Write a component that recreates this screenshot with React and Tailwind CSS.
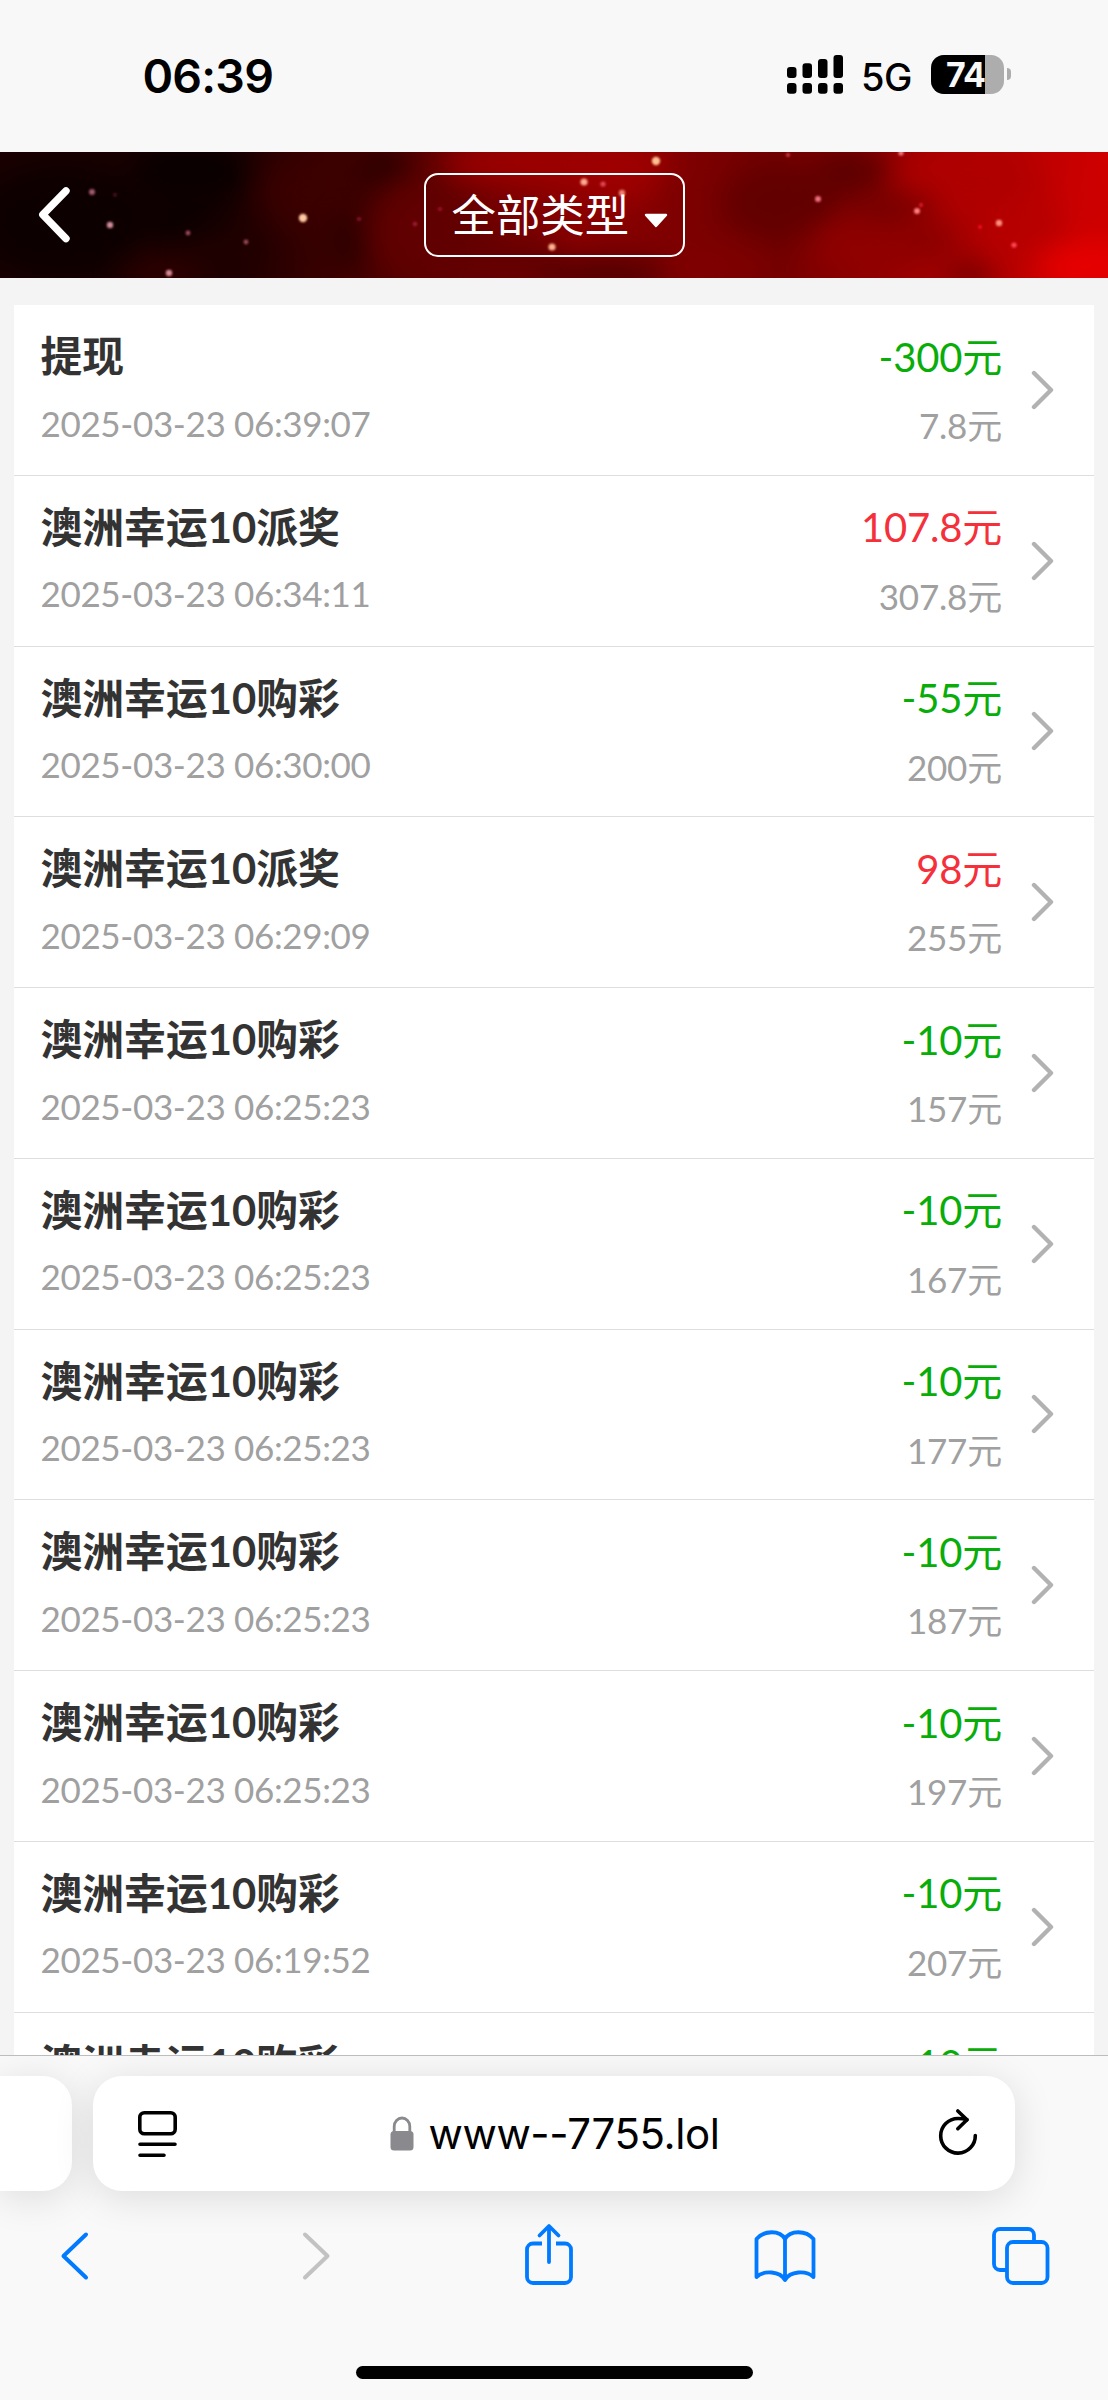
const records = [
  { title: "提现", time: "2025-03-23 06:39:07", amount: "-300", balance: "7.8" },
  { title: "澳洲幸运10派奖", time: "2025-03-23 06:34:11", amount: "107.8", balance: "307.8" },
  { title: "澳洲幸运10购彩", time: "2025-03-23 06:30:00", amount: "-55", balance: "200" },
  { title: "澳洲幸运10派奖", time: "2025-03-23 06:29:09", amount: "98", balance: "255" },
  { title: "澳洲幸运10购彩", time: "2025-03-23 06:25:23", amount: "-10", balance: "157" },
  { title: "澳洲幸运10购彩", time: "2025-03-23 06:25:23", amount: "-10", balance: "167" },
  { title: "澳洲幸运10购彩", time: "2025-03-23 06:25:23", amount: "-10", balance: "177" },
  { title: "澳洲幸运10购彩", time: "2025-03-23 06:25:23", amount: "-10", balance: "187" },
  { title: "澳洲幸运10购彩", time: "2025-03-23 06:25:23", amount: "-10", balance: "197" },
  { title: "澳洲幸运10购彩", time: "2025-03-23 06:19:52", amount: "-10", balance: "207" },
  { title: "澳洲幸运10购彩", amount: "-10" },
];

// cx, cy, rx, ry, color
const clouds = [
  [60, 70, 90, 60, "#0c0000"],
  [190, 20, 60, 30, "#080000"],
  [180, 65, 40, 30, "#0c0000"],
  [170, 120, 50, 16, "#340000"],
  [225, 100, 40, 20, "#200000"],
  [320, 40, 60, 40, "#3c0000"],
  [385, 15, 24, 14, "#1c0000"],
  [350, 90, 16, 26, "#240000"],
  [420, 80, 50, 50, "#620000"],
  [540, 10, 100, 26, "#a00000"],
  [500, 110, 60, 20, "#600000"],
  [630, 20, 50, 30, "#a00000"],
  [600, 122, 70, 16, "#440000"],
  [690, 40, 30, 30, "#7c0000"],
  [780, 50, 60, 40, "#600000"],
  [850, 20, 40, 26, "#580000"],
  [720, 115, 50, 18, "#800000"],
  [870, 95, 60, 26, "#900000"],
  [970, 30, 70, 40, "#b00000"],
  [895, 56, 44, 12, "#680000"],
  [935, 88, 26, 10, "#780000"],
  [970, 124, 26, 10, "#500000"],
  [1030, 80, 40, 30, "#b60000"],
  [1095, 60, 22, 40, "#cc0000"],
  [1085, 115, 50, 24, "#ec0000"],
];

// cx, cy, r, color
const stars = [
  [92, 40, 3, "#a05a70"],
  [115, 43, 2.4, "#380818"],
  [110, 73, 3.2, "#d08a98"],
  [188, 81, 2.4, "#a04a60"],
  [246, 90, 2.4, "#9a4a55"],
  [169, 121, 3.2, "#d88890"],
  [303, 66, 4.2, "#ffc9a0"],
  [359, 67, 2, "#8a1830"],
  [415, 72, 2.2, "#a01c38"],
  [440, 57, 2, "#9a1830"],
  [552, 95, 3.6, "#ffb090"],
  [584, 30, 3.6, "#ffa890"],
  [603, 32, 2.6, "#e04858"],
  [622, 41, 3.2, "#f08070"],
  [656, 9, 4.2, "#ffc090"],
  [788, 3, 2, "#d03848"],
  [818, 47, 3, "#f07080"],
  [901, 1, 2.6, "#f07880"],
  [917, 59, 3, "#ff8080"],
  [921, 53, 2, "#e02030"],
  [999, 71, 3.2, "#ff9080"],
  [980, 75, 2, "#f01028"],
  [1014, 93, 2.6, "#ff4858"],
];

function StatusBar() {
  return (
    <div className="h-[152px] shrink-0 bg-[#f8f8f8] flex justify-between pl-[142.5px] pr-[97px] pt-[46px] text-black font-['Inter',sans-serif]">
      <span className="pt-px text-[46.5px] leading-[58px] font-semibold tracking-[-0.8px]">06:39</span>
      <div className="flex pt-[9px]">
        <svg width="56" height="39" viewBox="0 0 56 39">
          {[[0, 12], [15.5, 8.3], [31, 4], [46.5, 0]].map(([x, y]) => (
            <g key={x}>
              <rect x={x} y={y} width="9.5" height={23 - y} rx="3" />
              <rect x={x} y="28" width="9.5" height="10.7" rx="3" />
            </g>
          ))}
        </svg>
        <span className="ml-[18px] w-[70px] text-[38px] leading-[44px] font-medium tracking-[-0.6px]">5G</span>
        <div className="relative w-[73px] h-[39px] rounded-[13px] overflow-hidden bg-[#adadad]">
          <div className="w-[54px] h-full bg-black" />
          <span className="absolute left-[15px] top-0 text-[34px] leading-[39px] font-bold text-[#f8f8f8] tracking-[-0.8px]">74</span>
        </div>
        <div className="ml-[3px] mt-[13px] w-1 h-3 rounded-r-full bg-[#adadad]" />
      </div>
    </div>
  );
}

function Header() {
  return (
    <div className="relative h-[126px] shrink-0 overflow-hidden flex items-center justify-center">
      <svg className="absolute inset-0" width="1108" height="126" viewBox="0 0 1108 126">
        <defs>
          <linearGradient id="sky" x1="0" x2="1" y1="0" y2="0">
            <stop offset="0" stopColor="#1c0000" />
            <stop offset="0.2" stopColor="#1a0000" />
            <stop offset="0.3" stopColor="#3c0000" />
            <stop offset="0.42" stopColor="#680000" />
            <stop offset="0.52" stopColor="#8a0000" />
            <stop offset="0.7" stopColor="#740000" />
            <stop offset="0.85" stopColor="#a60000" />
            <stop offset="1" stopColor="#d00000" />
          </linearGradient>
          <filter id="haze" filterUnits="userSpaceOnUse" x="-100" y="-100" width="1308" height="326" colorInterpolationFilters="sRGB">
            <feGaussianBlur stdDeviation="15" />
          </filter>
          <filter id="glow" x="-100%" y="-100%" width="300%" height="300%">
            <feGaussianBlur stdDeviation="1.3" />
          </filter>
        </defs>
        <rect width="1108" height="126" fill="url(#sky)" />
        {clouds.map(([cx, cy, rx, ry, fill], i) => (
          <ellipse key={i} cx={cx} cy={cy} rx={rx} ry={ry} fill={fill} opacity="0.9" filter="url(#haze)" />
        ))}
        {stars.map(([cx, cy, r, fill], i) => (
          <circle key={i} cx={cx} cy={cy} r={r} fill={fill} filter="url(#glow)" />
        ))}
      </svg>
      <svg className="absolute left-[38px] top-[34px]" width="34" height="58" viewBox="0 0 34 58" fill="none" stroke="#fff" strokeWidth="7.4" strokeLinecap="round" strokeLinejoin="round">
        <path d="M28 4.8 4.8 28.7 28 52.6" />
      </svg>
      <button className="relative w-[261px] h-[84px] rounded-[14px] border-2 border-white flex items-center pl-[26px] text-white">
        <span className="-mt-[4px] text-[44.4px] leading-[60px] font-['Noto_Sans_CJK_SC',sans-serif] font-normal">全部类型</span>
        <svg className="ml-[15px] mt-[12px]" width="24" height="16" viewBox="0 0 24 16" fill="#fff" stroke="#fff" strokeWidth="2.4" strokeLinejoin="round">
          <path d="M2 2h20L12 13z" />
        </svg>
      </button>
    </div>
  );
}

function RecordRow({ title, time, amount, balance }) {
  return (
    <div className="h-[170.75px] shrink-0 border-b-[1.4px] border-[#dedede] flex justify-between pl-[26.5px] pr-[39px] font-['Lato','Noto_Sans_CJK_SC',sans-serif]">
      <div className="pt-[21px]">
        <p className="text-[41.8px] leading-[60px] font-bold text-[#333]">{title}</p>
        {time && <p className="mt-[6.5px] text-[35px] leading-[60px] tracking-[-0.35px] text-[#a0a0a0]">{time}</p>}
      </div>
      <div className="flex items-center">
        <div className="h-full pt-[21.5px] text-right">
          <p className={`text-[40px] leading-[60px] tracking-[-0.2px] ${amount.startsWith("-") ? "text-[#09ad09]" : "text-[#f5303a]"}`}>{amount}元</p>
          {balance && <p className="mt-[8.5px] text-[35px] leading-[60px] tracking-[-0.2px] text-[#a0a0a0]">{balance}元</p>}
        </div>
        <svg className="ml-[29px]" width="24" height="40" viewBox="0 0 24 40" fill="none" stroke="#b2b2b2" strokeWidth="4.4" strokeLinecap="round" strokeLinejoin="round">
          <path d="M3 3 20 20 3 37" />
        </svg>
      </div>
    </div>
  );
}

function AddressBar() {
  return (
    <div className="flex gap-[21px] pt-[20px]">
      <div className="w-[72px] h-[115px] rounded-r-[29px] bg-white shadow-[0_6px_40px_rgba(0,0,0,0.12)]" />
      <div className="w-[922px] h-[115px] rounded-[29px] bg-white shadow-[0_6px_40px_rgba(0,0,0,0.12)] flex items-center justify-between pl-[45px] pr-[36px]">
        <svg width="39" height="50" viewBox="0 0 39 50" fill="none" stroke="#000" strokeWidth="3.6" strokeLinecap="round">
          <rect x="1.8" y="3.8" width="35.4" height="21" rx="4.5" />
          <path d="M2 35.3h35M2 46.3h24" />
        </svg>
        <div className="flex items-center mr-[4px]">
          <svg width="24" height="35" viewBox="0 0 24 35">
            <path d="M4.2 17v-6.5a7.8 8.5 0 0 1 15.6 0V17" fill="none" stroke="#8a898e" strokeWidth="2.8" />
            <rect x="0.5" y="15" width="23" height="19.5" rx="3.5" fill="#8a898e" />
          </svg>
          <span className="ml-[14px] text-[42px] leading-[50px] text-black tracking-[-0.4px] font-['Inter',sans-serif]">www--7755.lol</span>
        </div>
        <svg className="-mt-px" width="42" height="50" viewBox="0 0 42 50" fill="none" stroke="#000" strokeWidth="3.6" strokeLinecap="round" strokeLinejoin="round">
          <path d="M38.3 27.5A17.3 17.3 0 1 1 21 10.5c3 0 6 .3 9 1.3" />
          <path d="M20.8 3 30 11.7l-9.2 9" />
        </svg>
      </div>
    </div>
  );
}

function Toolbar() {
  return (
    <div className="mt-[32px] h-[66px] flex items-center pl-[58.5px]">
      <svg width="32" height="52" viewBox="0 0 32 52" fill="none" stroke="#007aff" strokeWidth="4" strokeLinecap="round" strokeLinejoin="round">
        <path d="M27 4.5 4.5 26 27 47.5" />
      </svg>
      <svg className="ml-[209.5px]" width="32" height="52" viewBox="0 0 32 52" fill="none" stroke="#c2c2c2" strokeWidth="4" strokeLinecap="round" strokeLinejoin="round">
        <path d="M5 4.5 27.5 26 5 47.5" />
      </svg>
      <svg className="ml-[192px] -mt-1" width="50" height="64" viewBox="0 0 50 64" fill="none" stroke="#007aff" strokeWidth="3.8" strokeLinejoin="round">
        <path d="M18 21.5H9a6 6 0 0 0-6 6V55a6 6 0 0 0 6 6h32a6 6 0 0 0 6-6V27.5a6 6 0 0 0-6-6h-9" />
        <path d="M25 40V4.5M15.5 13.500 25 4l9.500 9.500" strokeLinecap="round" />
      </svg>
      <svg className="ml-[179.5px]" width="62" height="54" viewBox="0 0 62 54" fill="none" stroke="#007aff" strokeWidth="3.8" strokeLinecap="round" strokeLinejoin="round">
        <path d="M31 10v41c-5-9-21-10-28.500-3V10C10 1 26 1 31 10c5-9 21-9 28.500 0v38c-7.500-7-23.500-6-28.500 3" />
      </svg>
      <svg className="ml-[175px]" width="60" height="60" viewBox="0 0 60 60" fill="none" stroke="#007aff" strokeWidth="3.8">
        <rect x="16" y="16" width="40.5" height="41" rx="6" />
        <path d="M43 16V9a6 6 0 0 0-6-6H9a6 6 0 0 0-6 6v29a6 6 0 0 0 6 6h7" />
      </svg>
    </div>
  );
}

export default function App() {
  return (
    <div className="w-[1108px] h-[2400px] flex flex-col overflow-hidden bg-[#f4f4f4]">
      <StatusBar />
      <Header />
      <div className="flex-1 min-h-0 overflow-hidden px-[14px] pt-[27px]">
        <div className="bg-white flex flex-col">
          {records.map((record, i) => (
            <RecordRow key={i} {...record} />
          ))}
        </div>
      </div>
      <div className="h-[345px] shrink-0 overflow-hidden border-t border-[#bdbdbd] bg-[#f9f9f9] flex flex-col">
        <AddressBar />
        <Toolbar />
        <div className="mt-auto mb-[21px] mx-auto w-[397px] h-[13px] rounded-full bg-black" />
      </div>
    </div>
  );
}
